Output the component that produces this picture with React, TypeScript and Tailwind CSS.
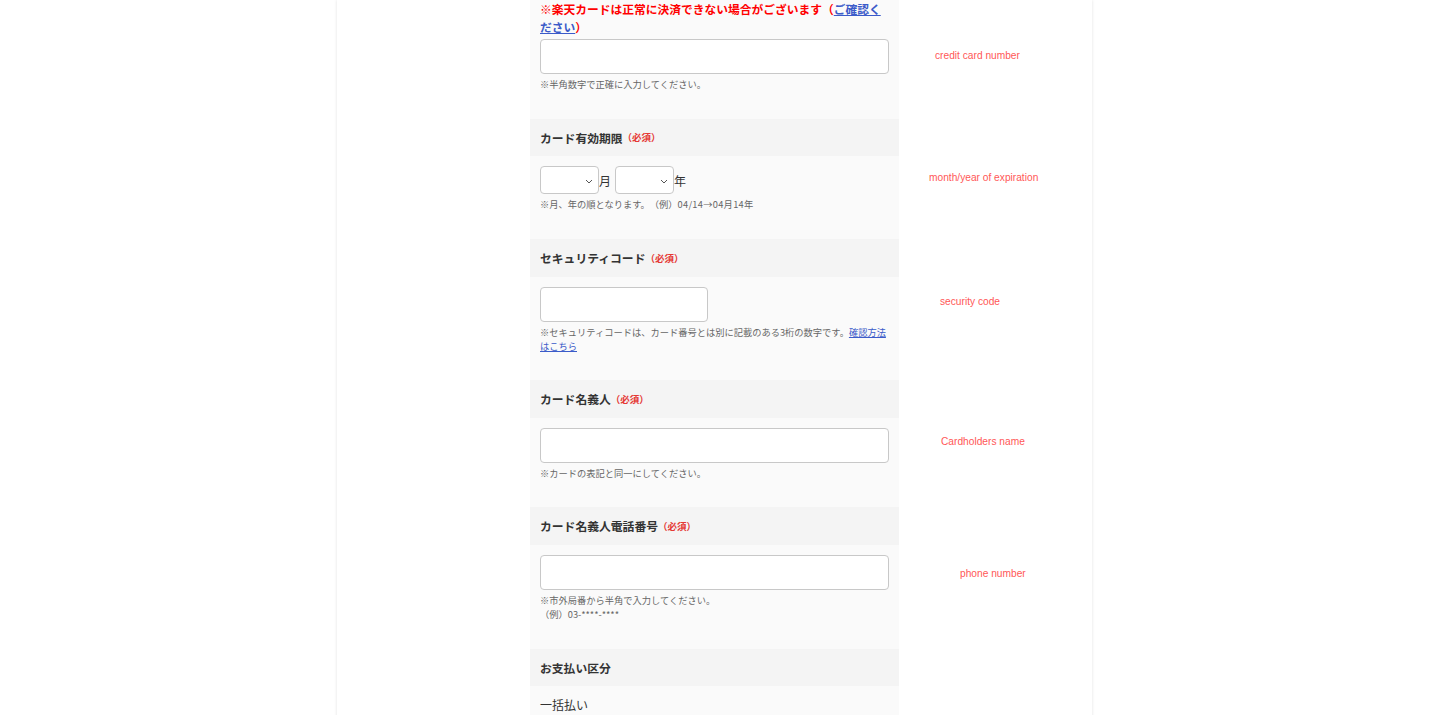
import React from 'react';

const jp = { fontFamily: '"Noto Sans CJK JP", "Noto Sans", sans-serif' };
const latin = { fontFamily: '"Liberation Sans", Arial, sans-serif' };

function Chevron() {
  return (
    <svg width="8" height="5" viewBox="0 0 8 5" className="absolute right-[5px] top-[12px]">
      <path d="M1 1l3 3 3-3" fill="none" stroke="#555" strokeWidth="1" />
    </svg>
  );
}

function Select() {
  return (
    <div className="relative h-[28px] w-[59px] rounded-[4px] border border-[#c8c8c8] bg-white">
      <Chevron />
    </div>
  );
}

function Header({ title, required = true, h }: { title: string; required?: boolean; h: string }) {
  return (
    <div className={`flex items-center bg-[#f4f4f4] px-[10px] ${h}`}>
      <span className="text-[11.8px] font-bold text-[#333]">{title}</span>
      {required && <span className="text-[9.5px] font-bold text-[#e53935]">（必須）</span>}
    </div>
  );
}

function Note({ children }: { children: React.ReactNode }) {
  return <p className="mt-[3px] text-[9.25px] leading-[14px] text-[#666]">{children}</p>;
}

function Annotation({ text, pt, pl }: { text: string; pt: string; pl: string }) {
  return (
    <div className={`flex-1 ${pt} ${pl}`}>
      <span className="block text-[10.2px] leading-[12px] text-[#ff5757]" style={latin}>
        {text}
      </span>
    </div>
  );
}

function Section({
  children,
  annotation,
}: {
  children: React.ReactNode;
  annotation?: React.ReactNode;
}) {
  return (
    <div className="flex">
      <div className="w-[193px] shrink-0" />
      <div className="w-[369px] shrink-0">{children}</div>
      {annotation ?? <div className="flex-1" />}
    </div>
  );
}

export default function App() {
  return (
    <div className="min-h-screen bg-white [text-spacing-trim:space-all]" style={jp}>
      <div className="mx-auto min-h-[715px] w-[755px] bg-white shadow-[0_0_3px_rgba(0,0,0,0.12)]">
        {/* credit card number */}
        <Section annotation={<Annotation text="credit card number" pt="pt-[50px]" pl="pl-[36px]" />}>
          <div className="h-[119px] bg-[#fafafa] px-[10px]">
            <p className="text-[11.75px] font-bold leading-[18px] text-[#ff0000]">
              ※楽天カードは正常に決済できない場合がございます（
              <a href="#" className="text-[#3b5bc9] underline">
                ご確認く
                <br />
                ださい
              </a>
              ）
            </p>
            <div className="mt-[3px] h-[35px] rounded-[4px] border border-[#c8c8c8] bg-white" />
            <Note>※半角数字で正確に入力してください。</Note>
          </div>
        </Section>

        {/* expiration */}
        <Section annotation={<Annotation text="month/year of expiration" pt="pt-[53px]" pl="pl-[30px]" />}>
          <Header title="カード有効期限" h="h-[37px]" />
          <div className="h-[83px] bg-[#fafafa] px-[10px] pt-[10px]">
            <div className="flex items-center">
              <Select />
              <span className="mr-[4px] mt-[2px] text-[12px] text-[#333]">月</span>
              <Select />
              <span className="mt-[2px] text-[12px] text-[#333]">年</span>
            </div>
            <Note>
              ※月、年の順となります。（例）
              <span className="tracking-[0.3px]">04/14→04月14年</span>
            </Note>
          </div>
        </Section>

        {/* security code */}
        <Section annotation={<Annotation text="security code" pt="pt-[57px]" pl="pl-[41px]" />}>
          <Header title="セキュリティコード" h="h-[38px]" />
          <div className="h-[103px] bg-[#fafafa] px-[10px] pt-[10px]">
            <div className="h-[35px] w-[168px] rounded-[4px] border border-[#c8c8c8] bg-white" />
            <Note>
              ※セキュリティコードは、カード番号とは別に記載のある3桁の数字です。
              <a href="#" className="text-[#3b5bc9] underline">
                確認方法
                <br />
                はこちら
              </a>
            </Note>
          </div>
        </Section>

        {/* cardholder name */}
        <Section annotation={<Annotation text="Cardholders name" pt="pt-[56px]" pl="pl-[42px]" />}>
          <Header title="カード名義人" h="h-[38px]" />
          <div className="h-[89px] bg-[#fafafa] px-[10px] pt-[10px]">
            <div className="h-[35px] rounded-[4px] border border-[#c8c8c8] bg-white" />
            <Note>※カードの表記と同一にしてください。</Note>
          </div>
        </Section>

        {/* phone */}
        <Section annotation={<Annotation text="phone number" pt="pt-[61px]" pl="pl-[61px]" />}>
          <Header title="カード名義人電話番号" h="h-[38px]" />
          <div className="h-[104px] bg-[#fafafa] px-[10px] pt-[10px]">
            <div className="h-[35px] rounded-[4px] border border-[#c8c8c8] bg-white" />
            <Note>
              ※市外局番から半角で入力してください。
              <br />
              （例）03-****-****
            </Note>
          </div>
        </Section>

        {/* payment type */}
        <Section>
          <Header title="お支払い区分" required={false} h="h-[37px]" />
          <div className="h-[60px] bg-[#fafafa] px-[10px] pt-[9px]">
            <p className="text-[12px] leading-[20px] text-[#333]">一括払い</p>
          </div>
        </Section>
      </div>
    </div>
  );
}
